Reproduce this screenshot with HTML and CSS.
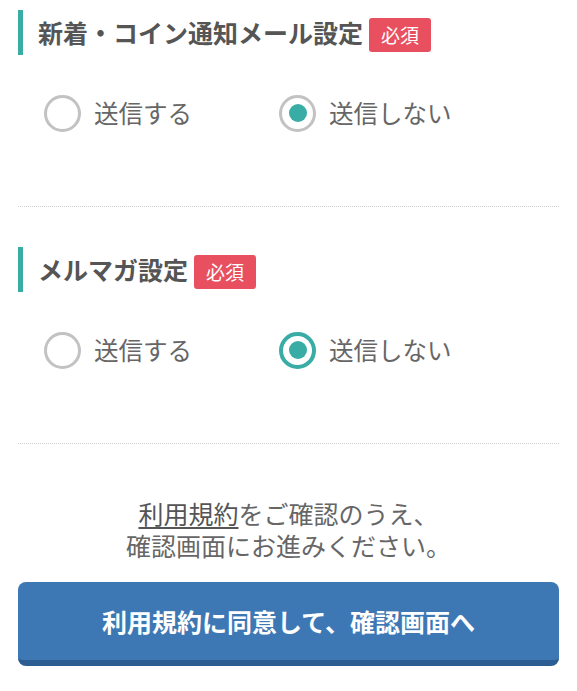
FILE: index.html
```html
<!DOCTYPE html>
<html lang="ja">
<head>
<meta charset="utf-8">
<link rel="stylesheet" href="styles.css">
</head>
<body>
<div class="page">
  <section class="section first">
    <h2 class="heading"><span class="heading-text">新着・コイン通知メール設定</span><span class="badge">必須</span></h2>
    <div class="options">
      <label class="option"><span class="radio"></span><span class="label">送信する</span></label>
      <label class="option"><span class="radio checked gray"></span><span class="label">送信しない</span></label>
    </div>
  </section>
  <section class="section">
    <h2 class="heading"><span class="heading-text">メルマガ設定</span><span class="badge">必須</span></h2>
    <div class="options">
      <label class="option"><span class="radio"></span><span class="label">送信する</span></label>
      <label class="option"><span class="radio checked teal"></span><span class="label">送信しない</span></label>
    </div>
  </section>
  <p class="notice"><a class="terms">利用規約</a>をご確認のうえ、<br>確認画面にお進みください。</p>
  <button class="submit">利用規約に同意して、確認画面へ</button>
</div>
</body>
</html>
```

FILE: styles.css
```css
* { box-sizing: border-box; }
html, body {
  margin: 0;
  padding: 0;
  background: #ffffff;
}
body {
  font-family: "Noto Sans CJK JP", "Noto Sans", sans-serif;
  color: #666;
}
.page {
  padding: 0 18px;
}
.section {
  padding-top: 40px;
  padding-bottom: 75px;
  border-bottom: 1px dotted #cfcfcf;
}
.section.first {
  padding-top: 10px;
}
.heading {
  margin: 0;
  height: 45px;
  display: flex;
  align-items: center;
  border-left: 5px solid #3aaca6;
  padding-left: 15px;
  font-size: 25px;
  font-weight: bold;
  color: #555;
  line-height: 1;
}
.badge {
  margin-left: 6px;
  margin-top: 4px;
  background: #e8505f;
  color: #fff;
  font-size: 19px;
  font-weight: normal;
  height: 34px;
  padding: 0 12px;
  display: inline-flex;
  align-items: center;
  border-radius: 3px;
}
.options {
  display: flex;
  margin-top: 40px;
  padding-left: 26px;
}
.option {
  display: flex;
  align-items: center;
  width: 235px;
  height: 36px;
}
.radio {
  width: 37px;
  height: 37px;
  border-radius: 50%;
  border: 3px solid #c2c2c2;
  display: flex;
  align-items: center;
  justify-content: center;
  flex: none;
}
.radio.checked::after {
  content: "";
  width: 18px;
  height: 18px;
  border-radius: 50%;
  background: #3aaca6;
}
.radio.teal {
  border: 4px solid #3aaca6;
}
.label {
  margin-left: 13px;
  font-size: 24.5px;
  color: #666;
  line-height: 1;
}
.notice {
  margin: 53px 0 21px;
  text-align: center;
  font-size: 25px;
  line-height: 32px;
  color: #666;
}
.terms {
  color: #555;
  text-decoration: underline;
  text-underline-offset: 3px;
}
.submit {
  display: block;
  width: 100%;
  height: 84px;
  border: none;
  border-bottom: 6px solid #2b5d93;
  border-radius: 8px;
  background: #3d78b4;
  color: #fff;
  font-family: "Noto Sans CJK JP", "Noto Sans", sans-serif;
  font-size: 25px;
  font-weight: bold;
  padding: 0;
}
```
